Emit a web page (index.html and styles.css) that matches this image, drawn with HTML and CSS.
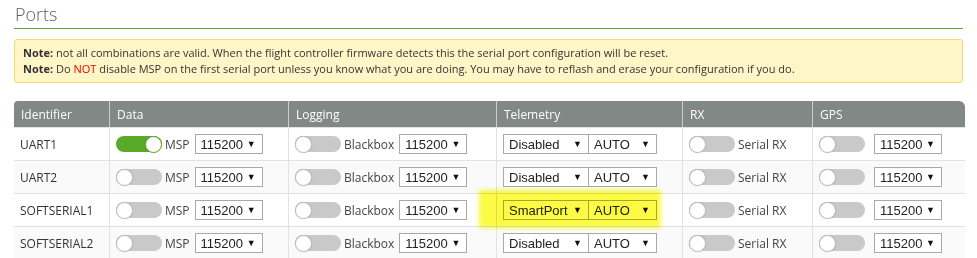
FILE: index.html
```html
<!DOCTYPE html>
<html>
<head>
<meta charset="utf-8">
<link rel="stylesheet" href="styles.css">
</head>
<body>
<div class="page">
  <h2 class="title">Ports</h2>
  <div class="note">
    <p><strong>Note:</strong> not all combinations are valid. When the flight controller firmware detects this the serial port configuration will be reset.</p>
    <p><strong>Note:</strong> Do <span class="red">NOT</span> disable MSP on the first serial port unless you know what you are doing. You may have to reflash and erase your configuration if you do.</p>
  </div>
  <table class="ports">
    <thead>
      <tr>
        <th class="c-id">Identifier</th>
        <th class="c-data">Data</th>
        <th class="c-log">Logging</th>
        <th class="c-tel">Telemetry</th>
        <th class="c-rx">RX</th>
        <th class="c-gps">GPS</th>
      </tr>
    </thead>
    <tbody>
      <tr>
        <td>UART1</td>
        <td><div class="cell"><span class="toggle on"><span class="knob"></span></span><span class="lbl">MSP</span><span class="sel w68"><span>115200</span><i>▼</i></span></div></td>
        <td><div class="cell"><span class="toggle"><span class="knob"></span></span><span class="lbl">Blackbox</span><span class="sel w68"><span>115200</span><i>▼</i></span></div></td>
        <td><div class="cell tel"><span class="sel w86"><span>Disabled</span><i>▼</i></span><span class="sel w68 joined"><span>AUTO</span><i>▼</i></span></div></td>
        <td><div class="cell"><span class="toggle"><span class="knob"></span></span><span class="lbl">Serial RX</span></div></td>
        <td><div class="cell"><span class="toggle"><span class="knob"></span></span><span class="sel w68 gps"><span>115200</span><i>▼</i></span></div></td>
      </tr>
      <tr>
        <td>UART2</td>
        <td><div class="cell"><span class="toggle"><span class="knob"></span></span><span class="lbl">MSP</span><span class="sel w68"><span>115200</span><i>▼</i></span></div></td>
        <td><div class="cell"><span class="toggle"><span class="knob"></span></span><span class="lbl">Blackbox</span><span class="sel w68"><span>115200</span><i>▼</i></span></div></td>
        <td><div class="cell tel"><span class="sel w86"><span>Disabled</span><i>▼</i></span><span class="sel w68 joined"><span>AUTO</span><i>▼</i></span></div></td>
        <td><div class="cell"><span class="toggle"><span class="knob"></span></span><span class="lbl">Serial RX</span></div></td>
        <td><div class="cell"><span class="toggle"><span class="knob"></span></span><span class="sel w68 gps"><span>115200</span><i>▼</i></span></div></td>
      </tr>
      <tr>
        <td>SOFTSERIAL1</td>
        <td><div class="cell"><span class="toggle"><span class="knob"></span></span><span class="lbl">MSP</span><span class="sel w68"><span>115200</span><i>▼</i></span></div></td>
        <td><div class="cell"><span class="toggle"><span class="knob"></span></span><span class="lbl">Blackbox</span><span class="sel w68"><span>115200</span><i>▼</i></span></div></td>
        <td><div class="cell tel highlight"><span class="sel w86"><span>SmartPort</span><i>▼</i></span><span class="sel w68 joined"><span>AUTO</span><i>▼</i></span></div></td>
        <td><div class="cell"><span class="toggle"><span class="knob"></span></span><span class="lbl">Serial RX</span></div></td>
        <td><div class="cell"><span class="toggle"><span class="knob"></span></span><span class="sel w68 gps"><span>115200</span><i>▼</i></span></div></td>
      </tr>
      <tr>
        <td>SOFTSERIAL2</td>
        <td><div class="cell"><span class="toggle"><span class="knob"></span></span><span class="lbl">MSP</span><span class="sel w68"><span>115200</span><i>▼</i></span></div></td>
        <td><div class="cell"><span class="toggle"><span class="knob"></span></span><span class="lbl">Blackbox</span><span class="sel w68"><span>115200</span><i>▼</i></span></div></td>
        <td><div class="cell tel"><span class="sel w86"><span>Disabled</span><i>▼</i></span><span class="sel w68 joined"><span>AUTO</span><i>▼</i></span></div></td>
        <td><div class="cell"><span class="toggle"><span class="knob"></span></span><span class="lbl">Serial RX</span></div></td>
        <td><div class="cell"><span class="toggle"><span class="knob"></span></span><span class="sel w68 gps"><span>115200</span><i>▼</i></span></div></td>
      </tr>
    </tbody>
  </table>
</div>
</body>
</html>
```

FILE: styles.css
```css
html, body {
  margin: 0;
  padding: 0;
  background: #fff;
}
body {
  font-family: "Open Sans", "Liberation Sans", sans-serif;
  color: #333;
}
.page {
  padding: 0 12px 0 14px;
}
.title {
  margin: 0;
  padding: 3px 0 3px 1px;
  font-size: 18px;
  line-height: 22px;
  font-weight: 300;
  color: #5e5e5e;
  border-bottom: 1px solid #59aa29;
  margin-right: 2px;
}
.note {
  margin: 10px 2px 0 0;
  padding: 5px 8px;
  background: #fff6c8;
  border: 1px solid #f3d96f;
  border-radius: 3px;
  font-size: 11px;
  line-height: 16px;
  color: #333;
}
.note p {
  margin: 0;
}
.note strong {
  font-weight: 700;
}
.red {
  color: #e00;
}
.ports {
  margin-top: 18px;
  width: 100%;
  border-collapse: separate;
  border-spacing: 0;
  font-size: 12px;
}
.ports th {
  background: #828885;
  color: #fff;
  font-weight: 400;
  text-align: left;
  height: 26px;
  padding: 0 0 0 7px;
  border-left: 1px solid #ccc;
  box-sizing: border-box;
}
.ports th:first-child {
  border-left: none;
  border-top-left-radius: 4px;
}
.ports th:last-child {
  border-top-right-radius: 6px;
}
.c-id { width: 95px; }
.c-data { width: 179px; }
.c-log { width: 208px; }
.c-tel { width: 186px; }
.c-rx { width: 130px; }
.ports td {
  height: 33px;
  padding: 0 0 0 6px;
  border-left: 1px solid #e2e2e2;
  border-top: 1px solid #e2e2e2;
  box-sizing: border-box;
  color: #333;
}
.ports td:first-child {
  border-left: none;
}
.ports tbody tr:nth-child(even) td {
  background: #fafafa;
}
.cell {
  display: flex;
  align-items: center;
}
.toggle {
  display: flex;
  align-items: center;
  width: 46px;
  height: 16px;
  border-radius: 8px;
  background: #c9c9c9;
  flex: none;
}
.toggle.on {
  background: #59aa29;
  justify-content: flex-end;
}
.knob {
  width: 17px;
  height: 17px;
  box-sizing: border-box;
  border-radius: 50%;
  background: #fff;
  border: 1px solid #bdbdbd;
  box-shadow: 0 0 1px rgba(0,0,0,0.2);
}
.toggle.on .knob {
  border-color: #59aa29;
}
.lbl {
  margin: 0 5px 0 3px;
  color: #444;
  white-space: nowrap;
}
.sel {
  display: flex;
  align-items: center;
  justify-content: space-between;
  height: 20px;
  box-sizing: border-box;
  border: 1px solid #a9a9a9;
  background: #fff;
  padding: 0 6px 0 5px;
  font-family: "Liberation Sans", Arial, sans-serif;
  font-size: 13px;
  color: #222;
  flex: none;
}
.sel i {
  font-style: normal;
  font-size: 9px;
  color: #111;
}
.w68 { width: 68px; }
.w86 { width: 86px; }
.joined { border-left: none; width: 68px; }
.gps { margin-left: 9px; }
.tel {
  position: relative;
}
.highlight::before {
  content: "";
  position: absolute;
  left: -24px;
  top: -10px;
  width: 182px;
  height: 38px;
  background: #fbfb45;
  filter: blur(2px);
  mix-blend-mode: multiply;
  z-index: 1;
}
```
